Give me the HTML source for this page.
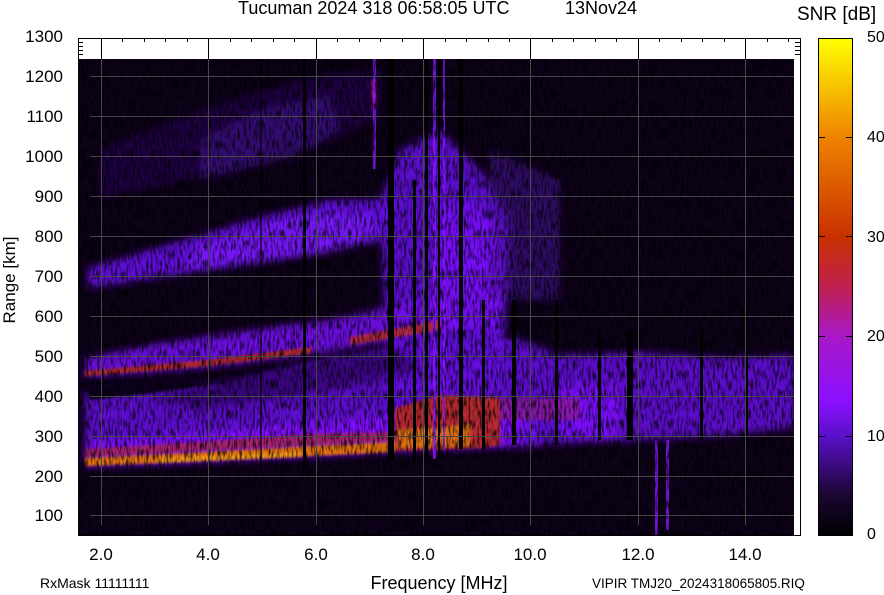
<!DOCTYPE html>
<html><head><meta charset="utf-8"><style>
html,body{margin:0;padding:0;background:#fff;}
svg{display:block;}
text{font-family:"Liberation Sans",Arial,sans-serif;fill:#000;}
</style></head><body>
<svg width="884" height="595" viewBox="0 0 884 595" xmlns="http://www.w3.org/2000/svg">
<defs>
<filter id="b" x="-10%" y="-10%" width="120%" height="120%"><feGaussianBlur stdDeviation="4"/></filter>
<filter id="b1"><feGaussianBlur stdDeviation="1.2"/></filter>
<filter id="nz" x="0" y="0" width="100%" height="100%">
<feTurbulence type="fractalNoise" baseFrequency="0.45 0.1" numOctaves="2" seed="3"/>
<feColorMatrix type="matrix" values="0 0 0 0 0  0 0 0 0 0  0 0 0 0 0  0 0 0 -3 1.7"/>
</filter>
<linearGradient id="cb" x1="0" y1="1" x2="0" y2="0">
<stop offset="0" stop-color="#000"/>
<stop offset="0.08" stop-color="#1a0630"/>
<stop offset="0.2" stop-color="#5a10c8"/>
<stop offset="0.27" stop-color="#8a10ff"/>
<stop offset="0.4" stop-color="#a818c8"/>
<stop offset="0.5" stop-color="#c02050"/>
<stop offset="0.6" stop-color="#c83000"/>
<stop offset="0.8" stop-color="#ee8200"/>
<stop offset="1" stop-color="#ffff00"/>
</linearGradient>
<clipPath id="pc"><rect x="78" y="59" width="716" height="476"/></clipPath>
</defs>

<text x="238" y="14" font-size="18">Tucuman 2024 318 06:58:05 UTC</text>
<text x="565" y="14" font-size="18">13Nov24</text>
<text x="797" y="20" font-size="19">SNR [dB]</text>

<rect x="78.5" y="38.5" width="722" height="497" fill="#fff" stroke="#000"/>
<rect x="78" y="59" width="716" height="476" fill="#000"/>

<g clip-path="url(#pc)">
 <rect x="78" y="59" width="716" height="476" fill="#160428" opacity="0.6"/>
 <g filter="url(#b)">
  <polygon points="100,198 240,168 330,140 380,118 380,70 300,80 200,110 100,150" fill="#3a0c80" opacity="0.4"/>
  <polygon points="200,180 300,155 340,130 330,95 260,110 200,140" fill="#4a12a0" opacity="0.5"/>
  <polygon points="88,288 200,271 311,255 388,238 400,200 330,200 250,220 150,250 88,268" fill="#6412e0" opacity="0.95"/>
  <polygon points="180,272 311,255 380,240 370,215 300,215 200,245" fill="#7c14ff" opacity="0.7"/>
  <polygon points="390,445 500,445 510,220 480,170 440,130 400,150 380,200" fill="#6410e0" opacity="0.9"/>
  <polygon points="440,330 500,330 505,230 470,200 440,210" fill="#7c12ff" opacity="0.8"/>
  <polygon points="490,300 560,300 560,180 490,150" fill="#4a10a0" opacity="0.55"/>
  <polygon points="85,378 208,368 311,355 420,335 500,320 500,295 420,300 330,320 250,330 150,345 85,358" fill="#7412f0" opacity="0.9"/>
  <polygon points="85,392 230,382 311,362 420,342 520,338 520,445 311,456 85,466" fill="#6410dc" opacity="0.9"/>
  <polygon points="85,467 208,462 311,457 430,450 540,446 540,405 430,412 311,422 208,432 85,442" fill="#8210ff" opacity="0.95"/>
  <polygon points="520,445 640,440 720,436 794,428 794,355 720,358 640,352 560,355 520,340" fill="#6a10e8" opacity="0.85"/>
  <polygon points="560,440 620,440 620,385 560,385" fill="#8010ff" opacity="0.8"/>
 </g>
 <polygon points="85,380 230,382 160,392 90,400" fill="#10041e" filter="url(#b1)"/>
 <polygon points="150,398 320,362 400,350 420,370 330,390 200,410" fill="#200648" opacity="0.6" filter="url(#b)"/>
 <g filter="url(#b1)">
  <polygon points="85,466 208,461 311,456 395,452 395,442 311,446 208,452 85,458" fill="#e07010"/>
  <polygon points="160,463 300,457 300,452 160,458" fill="#f0a018" opacity="0.8"/>
  <polygon points="85,457 311,445 395,441 395,432 311,434 200,442 85,449" fill="#b02840" opacity="0.75"/>
  <polygon points="395,451 480,448 500,445 500,398 440,395 395,408" fill="#c03010" opacity="0.85"/>
  <polygon points="398,448 470,446 470,425 398,430" fill="#e07a10" opacity="0.85"/>
  <polygon points="85,376 208,366 311,353 311,347 208,360 85,371" fill="#c03010" opacity="0.85"/>
  <polygon points="350,345 440,330 440,320 350,337" fill="#c03018" opacity="0.8"/>
  <polygon points="500,420 580,420 580,398 500,398" fill="#a01e70" opacity="0.5"/>
  <rect x="372" y="80" width="4" height="28" fill="#b02060"/>
 </g>
 <g fill="#8a14ff" opacity="0.8">
  <rect x="373" y="59" width="3" height="110"/>
  <rect x="433" y="59" width="3" height="400"/>
  <rect x="443" y="59" width="2" height="390"/>
  <rect x="655" y="440" width="3" height="95"/>
  <rect x="666" y="440" width="3" height="90"/>
 </g>
 <g fill="#000">
  <rect x="388" y="59" width="6" height="400"/>
  <rect x="413" y="180" width="3" height="280"/>
  <rect x="425" y="59" width="3" height="400"/>
  <rect x="438" y="59" width="2" height="400"/>
  <rect x="459" y="59" width="4" height="390"/>
  <rect x="482" y="300" width="3" height="150"/>
  <rect x="303" y="59" width="3" height="410"/>
  <rect x="260" y="59" width="2" height="410" opacity="0.6"/>
  <rect x="512" y="300" width="4" height="145"/>
  <rect x="555" y="300" width="3" height="145"/>
  <rect x="598" y="330" width="3" height="110"/>
  <rect x="627" y="330" width="6" height="110"/>
  <rect x="700" y="330" width="3" height="110"/>
  <rect x="745" y="300" width="3" height="140"/>
 </g>
 <rect x="78" y="59" width="716" height="476" filter="url(#nz)" opacity="0.75"/>
 <g stroke="#484848" stroke-width="1">
  <line x1="90" y1="76.5" x2="794" y2="76.5"/>
  <line x1="90" y1="116.5" x2="794" y2="116.5"/>
  <line x1="90" y1="156.5" x2="794" y2="156.5"/>
  <line x1="90" y1="196.5" x2="794" y2="196.5"/>
  <line x1="90" y1="236.5" x2="794" y2="236.5"/>
  <line x1="90" y1="276.5" x2="794" y2="276.5"/>
  <line x1="90" y1="316.5" x2="794" y2="316.5"/>
  <line x1="90" y1="356.5" x2="794" y2="356.5"/>
  <line x1="90" y1="396.5" x2="794" y2="396.5"/>
  <line x1="90" y1="436.5" x2="794" y2="436.5"/>
  <line x1="90" y1="476.5" x2="794" y2="476.5"/>
  <line x1="90" y1="515.5" x2="794" y2="515.5"/>
  <line x1="101.5" y1="59" x2="101.5" y2="525"/>
  <line x1="208.5" y1="59" x2="208.5" y2="525"/>
  <line x1="316.5" y1="59" x2="316.5" y2="525"/>
  <line x1="423.5" y1="59" x2="423.5" y2="525"/>
  <line x1="530.5" y1="59" x2="530.5" y2="525"/>
  <line x1="638.5" y1="59" x2="638.5" y2="525"/>
  <line x1="745.5" y1="59" x2="745.5" y2="525"/>
 </g>
</g>

<g stroke="#000" stroke-width="1">
 <line x1="101.5" y1="38" x2="101.5" y2="59"/>
 <line x1="208.5" y1="38" x2="208.5" y2="59"/>
 <line x1="316.5" y1="38" x2="316.5" y2="59"/>
 <line x1="423.5" y1="38" x2="423.5" y2="59"/>
 <line x1="530.5" y1="38" x2="530.5" y2="59"/>
 <line x1="638.5" y1="38" x2="638.5" y2="59"/>
 <line x1="745.5" y1="38" x2="745.5" y2="59"/>
 <path d="M122.5 38v4M144.5 38v4M165.5 38v4M187.5 38v4M230.5 38v4M251.5 38v4M273.5 38v4M294.5 38v4M337.5 38v4M359.5 38v4M380.5 38v4M402.5 38v4M445.5 38v4M466.5 38v4M488.5 38v4M509.5 38v4M552.5 38v4M573.5 38v4M595.5 38v4M616.5 38v4M659.5 38v4M681.5 38v4M702.5 38v4M724.5 38v4M767.5 38v4M788.5 38v4"/>
 <path d="M78 42.5h5M78 46.5h5M78 50.5h5M78 54.5h5M795 42.5h5M795 46.5h5M795 50.5h5M795 54.5h5"/>
</g>

<g font-size="17" text-anchor="end">
 <text x="63" y="42">1300</text>
 <text x="63" y="82">1200</text>
 <text x="63" y="122">1100</text>
 <text x="63" y="162">1000</text>
 <text x="63" y="202">900</text>
 <text x="63" y="242">800</text>
 <text x="63" y="282">700</text>
 <text x="63" y="322">600</text>
 <text x="63" y="362">500</text>
 <text x="63" y="402">400</text>
 <text x="63" y="442">300</text>
 <text x="63" y="482">200</text>
 <text x="63" y="521">100</text>
</g>
<text transform="translate(15,280) rotate(-90)" font-size="17" text-anchor="middle">Range [km]</text>

<g font-size="17" text-anchor="middle">
 <text x="101" y="560">2.0</text>
 <text x="208" y="560">4.0</text>
 <text x="316" y="560">6.0</text>
 <text x="423" y="560">8.0</text>
 <text x="530" y="560">10.0</text>
 <text x="638" y="560">12.0</text>
 <text x="745" y="560">14.0</text>
</g>
<text x="439" y="589" font-size="18" text-anchor="middle">Frequency [MHz]</text>
<text x="40" y="588" font-size="14">RxMask 11111111</text>
<text x="592" y="588" font-size="13.5">VIPIR  TMJ20_2024318065805.RIQ</text>

<rect x="818.5" y="38.5" width="34" height="497" fill="url(#cb)" stroke="#000"/>
<g stroke="#000">
 <path d="M818 137.5h7M846 137.5h7M818 236.5h7M846 236.5h7M818 336.5h7M846 336.5h7M818 436.5h7M846 436.5h7"/>
</g>
<g font-size="16">
 <text x="867" y="42">50</text>
 <text x="867" y="142">40</text>
 <text x="867" y="242">30</text>
 <text x="867" y="341">20</text>
 <text x="867" y="441">10</text>
 <text x="867" y="539">0</text>
</g>
</svg>
</body></html>
